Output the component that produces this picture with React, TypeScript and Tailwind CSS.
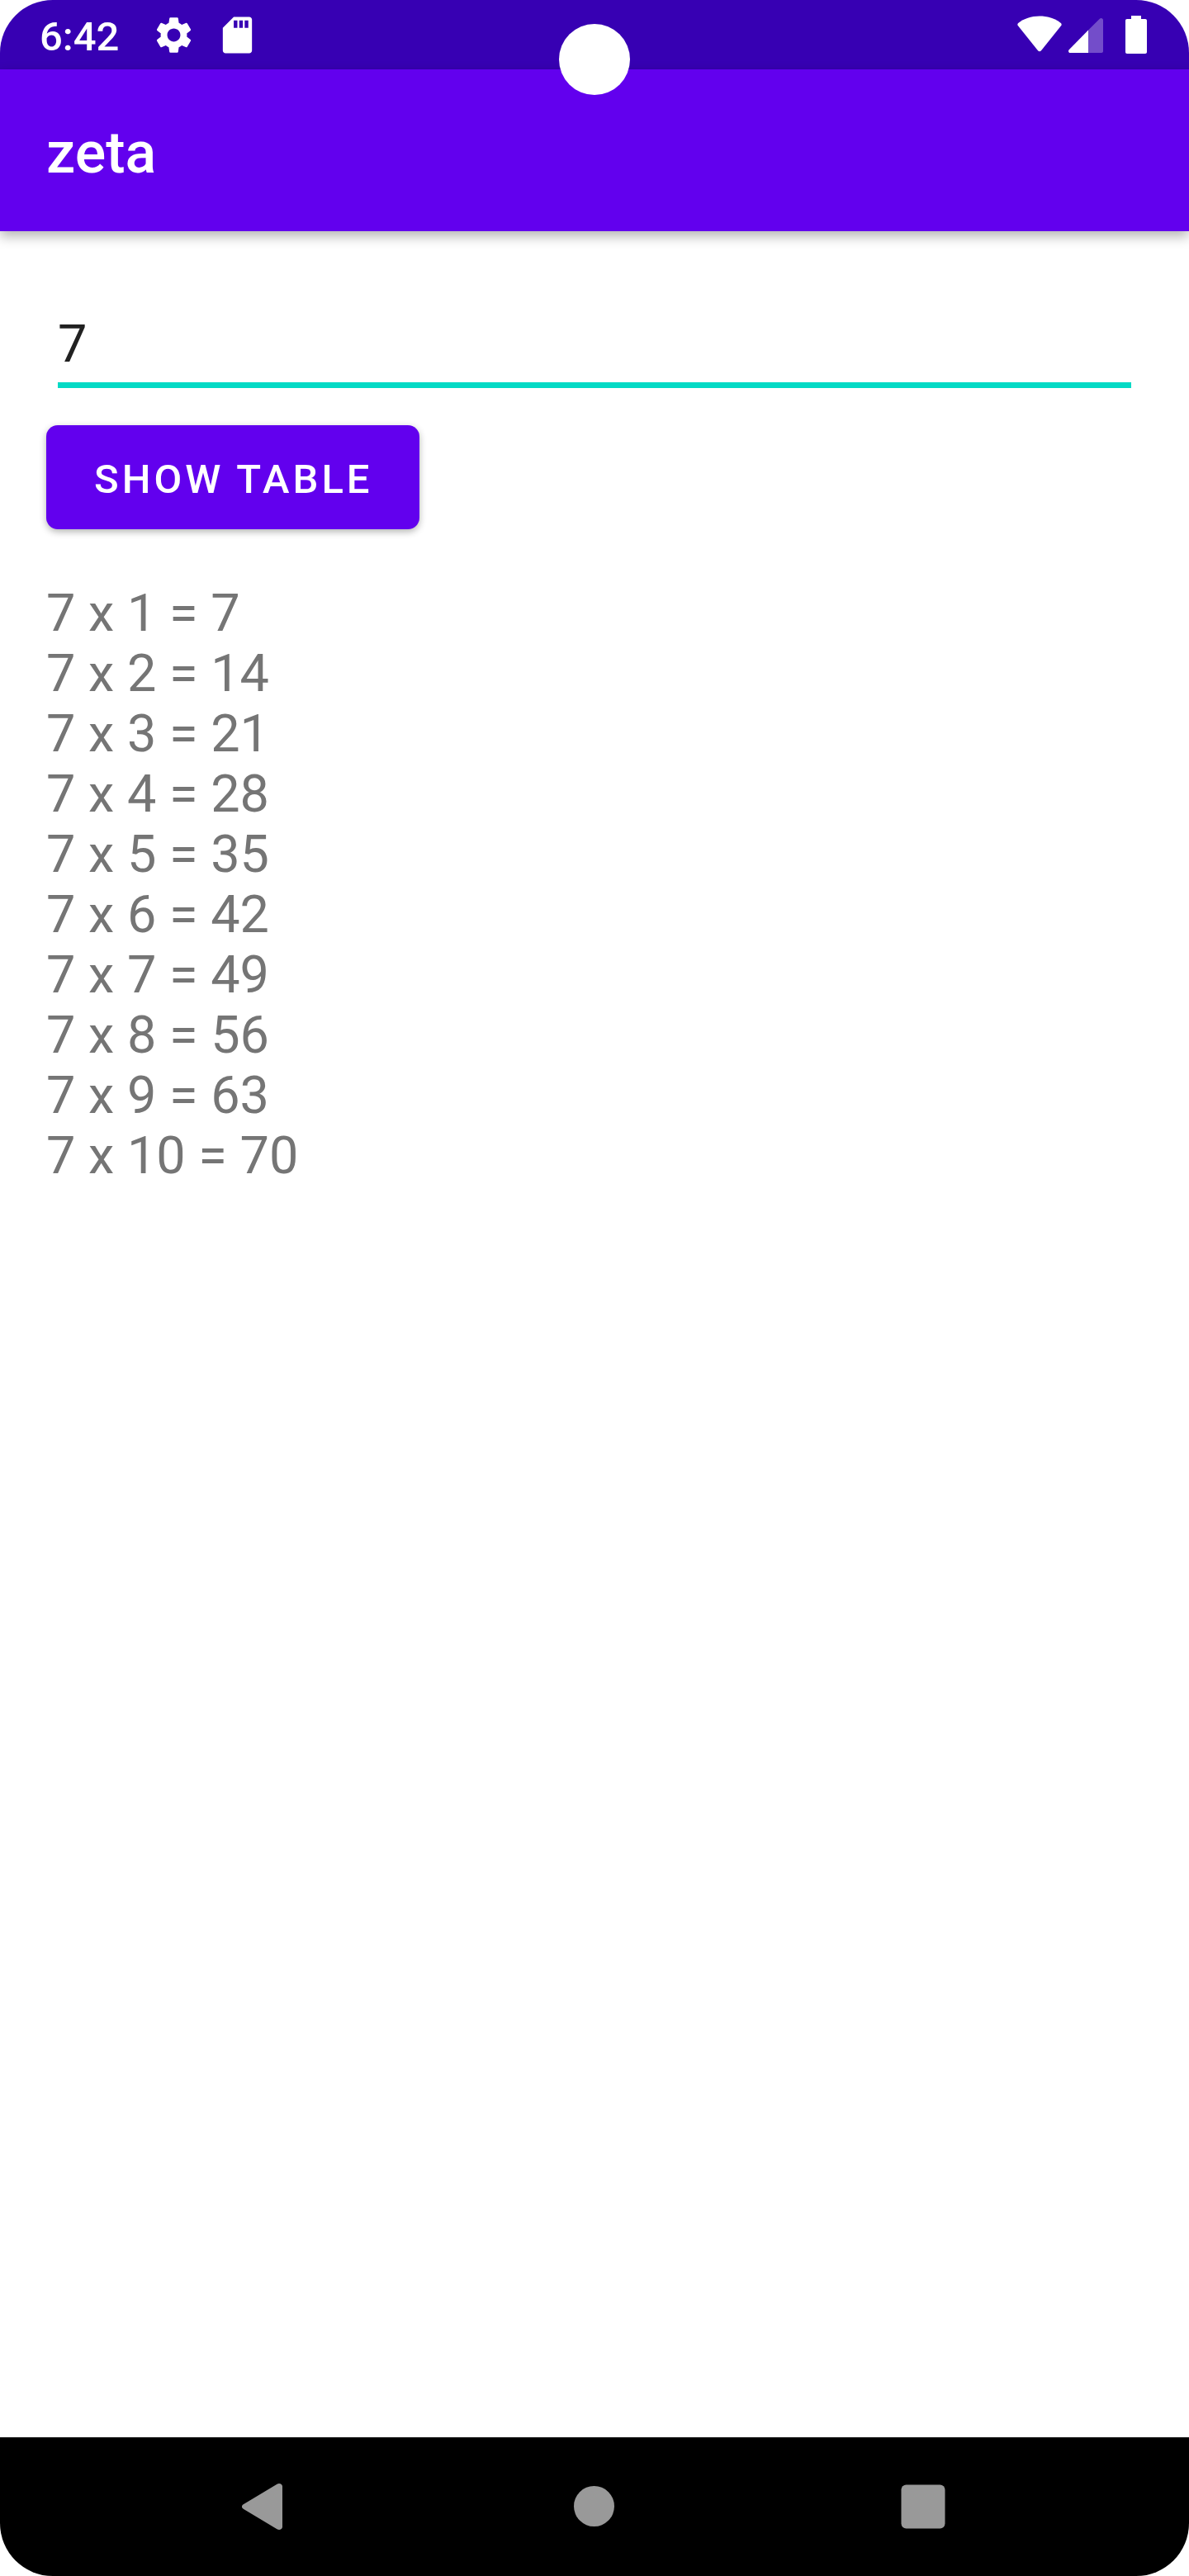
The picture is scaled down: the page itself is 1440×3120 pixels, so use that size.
import { useState } from "react";
import type { FormEvent } from "react";

function StatusBar() {
  return (
    <div className="flex h-[84px] items-center justify-between bg-[#3700b3] pr-[51px] pl-12">
      <div className="flex items-center text-white">
        <time className="pt-1 text-[49px] leading-[57px] font-medium">6:42</time>
        <svg viewBox="0 0 24 24" className="ml-10 size-[53px]" fill="currentColor" aria-label="Settings">
          <path d="M19.14 12.94c.04-.3.06-.61.06-.94 0-.32-.02-.64-.07-.94l2.03-1.58c.18-.14.23-.41.12-.61l-1.92-3.32c-.12-.22-.37-.29-.59-.22l-2.39.96c-.5-.38-1.03-.7-1.62-.94l-.36-2.54c-.04-.24-.24-.41-.48-.41h-3.84c-.24 0-.43.17-.47.41l-.36 2.54c-.59.24-1.13.57-1.62.94l-2.39-.96c-.22-.08-.47 0-.59.22L2.74 8.87c-.12.21-.08.47.12.61l2.03 1.58c-.05.3-.09.63-.09.94s.02.64.07.94l-2.03 1.58c-.18.14-.23.41-.12.61l1.92 3.32c.12.22.37.29.59.22l2.39-.96c.5.38 1.03.7 1.62.94l.36 2.54c.05.24.24.41.48.41h3.84c.24 0 .44-.17.47-.41l.36-2.54c.59-.24 1.13-.56 1.62-.94l2.39.96c.22.08.47 0 .59-.22l1.92-3.32c.12-.22.07-.47-.12-.61l-2.01-1.58zM12 15.6c-1.98 0-3.6-1.62-3.6-3.6s1.62-3.6 3.6-3.6 3.6 1.62 3.6 3.6-1.62 3.6-3.6 3.6z" />
        </svg>
        <svg viewBox="0 0 24 24" className="ml-6 size-[53px]" fill="currentColor" aria-label="SD card">
          <path d="M18.5 2H10L4 8v12.5c0 .8.7 1.5 1.5 1.5h13c.8 0 1.5-.7 1.5-1.5v-17c0-.8-.7-1.5-1.5-1.5zM12 8h-2V4h2v4zm3 0h-2V4h2v4zm3 0h-2V4h2v4z" />
        </svg>
      </div>
      <div className="flex items-center text-white">
        <svg viewBox="0 0 54 46" className="h-[46px] w-[54px]" fill="currentColor" aria-label="Wi-Fi">
          <path d="M27 .5C17 .5 8 3.5 1.2 9 .2 9.900.1 11.100.8 12.100L25 42.200c1.100 1.300 2.900 1.300 4 0L53.200 12.100c.7-1 .6-2.200-.4-3.100C46 3.500 37 .5 27 .5z" />
        </svg>
        <svg viewBox="0 0 42 46" className="ml-2 h-[46px] w-[42px]" fill="currentColor" aria-label="Mobile signal">
          <path opacity=".3" d="M24 17.500 37.800 3.700C39.400 2.100 42 3 42 5.300V43c0 1.200-.8 2-2 2H24z" />
          <path d="M24 17.500V45H2.300c-2.100 0-3-2.200-1.600-3.700z" />
        </svg>
        <svg viewBox="0 0 26 46" className="ml-[27px] h-[46px] w-[26px]" fill="currentColor" aria-label="Battery full">
          <path d="M7 0h12v4h5c1.200 0 2 .8 2 2v38c0 1.200-.8 2-2 2H2c-1.200 0-2-.8-2-2V6c0-1.200.8-2 2-2h5z" />
        </svg>
      </div>
    </div>
  );
}

function NavigationBar() {
  return (
    <nav className="flex h-[168px] items-center bg-black px-[120px] text-[#999999]">
      <button type="button" aria-label="Back" className="flex flex-1 justify-center">
        <svg viewBox="0 0 84 84" className="size-[84px]" fill="currentColor">
          <path d="M16.700 39.300 57.500 14.700c2.600-1.600 6.500-.4 6.500 2.800v49c0 3.200-3.900 4.400-6.500 2.800L16.700 44.700c-2.300-1.400-2.300-4 0-5.400z" />
        </svg>
      </button>
      <button type="button" aria-label="Home" className="flex flex-1 justify-center">
        <svg viewBox="0 0 84 84" className="size-[84px]" fill="currentColor">
          <circle cx="41.500" cy="41.500" r="24.500" />
        </svg>
      </button>
      <button type="button" aria-label="Recent apps" className="flex flex-1 justify-center">
        <svg viewBox="0 0 84 84" className="size-[84px]" fill="currentColor">
          <rect x="13.500" y="15.500" width="53" height="53" rx="6" />
        </svg>
      </button>
    </nav>
  );
}

export default function App() {
  const [value, setValue] = useState("7");
  const [base, setBase] = useState(7);

  const showTable = (event: FormEvent) => {
    event.preventDefault();
    const parsed = Number(value);
    if (value.trim() !== "" && Number.isFinite(parsed)) setBase(parsed);
  };

  return (
    <div className="relative flex min-h-screen flex-col overflow-hidden rounded-[64px] bg-white font-[Roboto,sans-serif]">
      <StatusBar />
      <div className="absolute top-[29px] left-1/2 size-[86px] -translate-x-1/2 rounded-full bg-white" />
      <header className="flex h-[196px] items-center bg-[#6200ee] px-14 pt-1.5 shadow-[0_6px_14px_rgba(0,0,0,0.3)]">
        <h1 className="text-[70px] leading-[82px] font-medium text-white">zeta</h1>
      </header>

      <main className="flex-1 px-14 pt-[92px]">
        <form onSubmit={showTable}>
          <div className="px-[14px]">
            <input
              type="text"
              inputMode="numeric"
              aria-label="Number"
              value={value}
              onChange={(event) => setValue(event.target.value)}
              className="block h-[98px] w-full border-b-[7px] border-[#03dac5] pb-0.5 text-[63px] leading-[73px] text-[#212121] outline-none"
            />
          </div>
          <button
            type="submit"
            className="mt-[45px] block h-[126px] rounded-[14px] bg-[#6200ee] pt-1 pr-14 pl-[58px] text-[49px] leading-[57px] font-medium tracking-[4px] text-white uppercase shadow-[0_3px_8px_rgba(0,0,0,0.3)]"
          >
            Show table
          </button>
        </form>
        <ul className="mt-[65px] text-[63px] leading-[73px] text-[#757575]">
          {Array.from({ length: 10 }, (_, i) => i + 1).map((n) => (
            <li key={n}>{`${base} x ${n} = ${base * n}`}</li>
          ))}
        </ul>
      </main>

      <NavigationBar />
    </div>
  );
}
